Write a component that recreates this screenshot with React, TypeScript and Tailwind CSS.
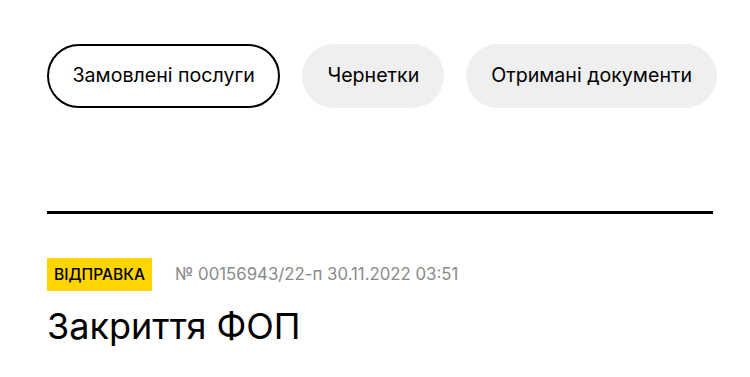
import React from "react";

export default function App() {
  const tabs = [
    { label: "Замовлені послуги", active: true },
    { label: "Чернетки", active: false },
    { label: "Отримані документи", active: false },
  ];
  return (
    <div className="w-[750px] h-[377px] bg-white overflow-hidden font-['Inter',sans-serif] text-black">
      <div className="pl-[47px] pr-[37px] pt-[44px]">
        <div className="flex gap-[22px]">
          {tabs.map((t) => (
            <div
              key={t.label}
              className={
                t.active
                  ? "h-[64px] px-[23.5px] flex items-center rounded-full border-2 border-black text-[19.6px] whitespace-nowrap"
                  : "h-[64px] px-[25px] flex items-center rounded-full bg-[#efefef] text-[19.6px] whitespace-nowrap"
              }
            >
              {t.label}
            </div>
          ))}
        </div>
        <div className="mt-[103px] h-[3px] bg-black w-[666px]" />
        <div className="mt-[44px] flex items-center gap-[23px]">
          <div className="bg-[#ffd500] h-[33px] px-[7px] flex items-center text-[15.6px] font-medium uppercase">
            Відправка
          </div>
          <div className="text-[16.8px] text-[#8a8a8a]">№ 00156943/22-п 30.11.2022 03:51</div>
        </div>
        <div className="mt-[13px] text-[36px] leading-[44px]">Закриття ФОП</div>
      </div>
    </div>
  );
}
